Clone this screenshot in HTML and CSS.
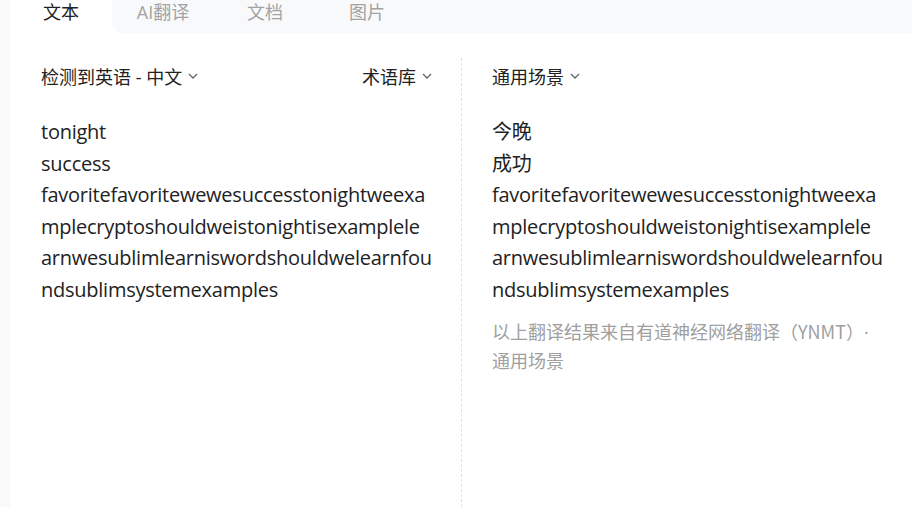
FILE: index.html
```html
<!DOCTYPE html>
<html lang="zh-CN">

<head>
    <meta charset="UTF-8">
    <meta name="viewport" content="width=device-width, initial-scale=1.0">
    <title>翻译</title>
    <link rel="stylesheet" href="styles.css">
</head>

<body>

    <div class="panel">
        <!-- Tabs -->
        <div class="tabs">
            <div class="tab active">文本</div>
            <div class="tab-rest">
                <div class="tab">AI翻译</div>
                <div class="tab">文档</div>
                <div class="tab">图片</div>
            </div>
        </div>

        <!-- Source and result -->
        <div class="columns">
            <div class="col" id="source-area">
                <div class="col-head">
                    <span class="select">检测到英语 - 中文
                        <svg class="chevron" width="10" height="6" viewBox="0 0 10 6"><polyline points="1,1 5,5 9,1" /></svg>
                    </span>
                    <span class="select">术语库
                        <svg class="chevron" width="10" height="6" viewBox="0 0 10 6"><polyline points="1,1 5,5 9,1" /></svg>
                    </span>
                </div>
                <div class="text">tonight<br>success<br>favoritefavoritewewesuccesstonightweexa<br>mplecryptoshouldweistonightisexamplele<br>arnwesublimlearniswordshouldwelearnfou<br>ndsublimsystemexamples</div>
            </div>

            <div class="col" id="result-area">
                <div class="col-head">
                    <span class="select">通用场景
                        <svg class="chevron" width="10" height="6" viewBox="0 0 10 6"><polyline points="1,1 5,5 9,1" /></svg>
                    </span>
                </div>
                <div class="text">今晚<br>成功<br>favoritefavoritewewesuccesstonightweexa<br>mplecryptoshouldweistonightisexamplele<br>arnwesublimlearniswordshouldwelearnfou<br>ndsublimsystemexamples</div>
                <div class="note">以上翻译结果来自有道神经网络翻译（YNMT）<span class="dot">·</span> 通用场景</div>
            </div>
        </div>
    </div>

</body>

</html>
```

FILE: styles.css
```css
html,
body {
    height: 100%;
}

body {
    margin: 0;
    padding-left: 10px;
    background-color: #f8f9fb;
    font-family: "Open Sans", "Noto Sans CJK SC", sans-serif;
    color: #222;
    overflow: hidden;
}

.panel {
    background-color: #fff;
    height: 100%;
    display: flex;
    flex-direction: column;
}

.tabs {
    display: flex;
    height: 33px;
    flex-shrink: 0;
}

.tab {
    width: 102px;
    text-align: center;
    font-size: 18px;
    line-height: 24px;
    color: #a3a3a3;
}

.tab.active {
    color: #222;
}

.tab-rest {
    flex: 1;
    display: flex;
    background-color: #f8f9fb;
    border-bottom-left-radius: 12px;
}

.columns {
    flex: 1;
    display: flex;
    padding-top: 25px;
}

.col {
    width: 451px;
    box-sizing: border-box;
    padding: 0 29px 0 31px;
}

#result-area {
    flex: 1;
    border-left: 1px dashed #e2e2e2;
    padding-left: 30px;
}

.col-head {
    display: flex;
    justify-content: space-between;
    align-items: center;
    height: 36px;
    font-size: 18px;
}

.select {
    display: flex;
    align-items: center;
}

.chevron {
    margin-left: 6px;
    fill: none;
    stroke: #666;
    stroke-width: 1.3;
}

.text {
    margin-top: 22px;
    font-size: 20px;
    line-height: 31.6px;
    letter-spacing: -0.25px;
    word-break: break-all;
}

#result-area .text {
    width: 395px;
}

.note {
    margin-top: 11px;
    width: 391px;
    font-family: "Noto Sans CJK SC", sans-serif;
    font-size: 18px;
    line-height: 28px;
    color: #a0a0a0;
    text-spacing-trim: space-all;
}

.note .dot {
    font-family: "Open Sans", sans-serif;
}
```
